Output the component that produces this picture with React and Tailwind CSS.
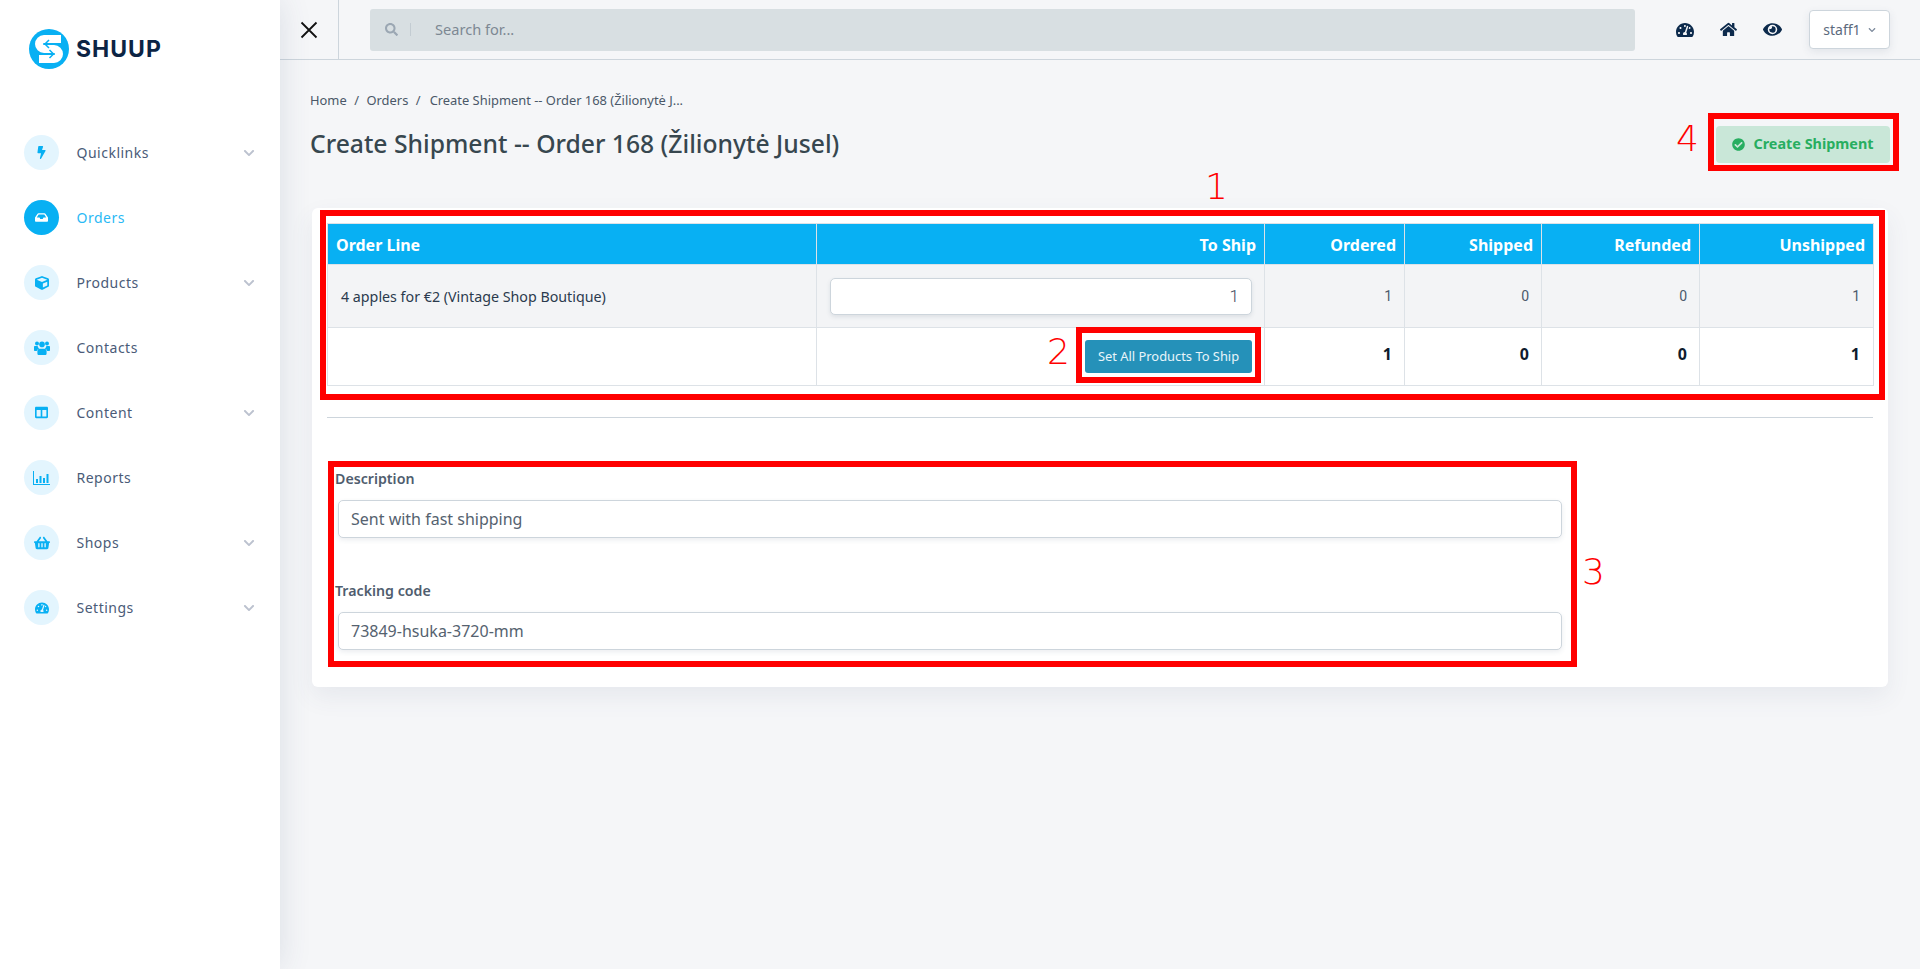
import React from 'react'
import {
  FaBolt, FaInbox, FaCube, FaColumns, FaShoppingBasket,
  FaTachometerAlt, FaHome, FaEye, FaCheckCircle, FaSearch, FaChevronDown,
} from 'react-icons/fa'

const UsersIcon = ({ className }) => (
  <svg className={className} width="16" height="14" viewBox="0 0 16 14" fill="currentColor">
    <circle cx="3" cy="2.600" r="2" />
    <circle cx="13" cy="2.600" r="2" />
    <circle cx="8" cy="3.400" r="2.800" />
    <path d="M0 5.800c0-.5.500-.8 1-.8h2.600c.2 1.100.8 2 1.600 2.600C3.800 8 3 9 2.800 10H1c-.6 0-1-.4-1-1zM16 5.800c0-.5-.5-.8-1-.8h-2.600c-.2 1.100-.8 2-1.600 2.600 1.400.4 2.200 1.400 2.400 2.400H15c.6 0 1-.4 1-1zM5.500 7.800h5c1.300 0 2.100 1 2.100 2.200v2.400c0 .9-.7 1.600-1.600 1.600H5c-.9 0-1.600-.7-1.600-1.600V10c0-1.200.8-2.200 2.100-2.200z" />
  </svg>
)

const BarsIcon = ({ className }) => (
  <svg className={className} width="17" height="14" viewBox="0 0 17 14" fill="currentColor">
    <path d="M0 0h1v13h16v1H0z" />
    <path d="M3 8h2v4H3zM6.500 5h2v7h-2zM10 7h2v5h-2zM13.500 3h2v9h-2z" />
  </svg>
)

const menu = [
  { label: 'Quicklinks', icon: FaBolt, size: 'text-[13px]', sub: true },
  { label: 'Orders', icon: FaInbox, size: 'text-[13px]', active: true },
  { label: 'Products', icon: FaCube, size: 'text-[14px]', sub: true },
  { label: 'Contacts', icon: UsersIcon },
  { label: 'Content', icon: FaColumns, size: 'text-[13px]', sub: true },
  { label: 'Reports', icon: BarsIcon },
  { label: 'Shops', icon: FaShoppingBasket, size: 'text-[16px]', sub: true },
  { label: 'Settings', icon: FaTachometerAlt, size: 'text-[14px]', sub: true },
]

const Logo = () => (
  <div className="flex items-center gap-[7px]">
    <svg width="40" height="40" viewBox="0 0 40 40">
      <circle cx="20" cy="20" r="20" fill="#08b0f3" />
      <path d="M32 10H15a5 5 0 0 0 0 10h10a5 5 0 0 1 0 10H10" fill="none" stroke="#fff" strokeWidth="8" />
      <path d="M20 11l-4 4 4 4M20.500 21l4 4 -4 4" fill="none" stroke="#08b0f3" strokeWidth="1.500" />
    </svg>
    <span className="font-['Inter',sans-serif] text-[23px] font-bold leading-none tracking-[1px] text-[#0c2444]">SHUUP</span>
  </div>
)

const SideItem = ({ item }) => {
  const Icon = item.icon
  return (
    <a className="flex h-[65px] items-center pl-6 pr-[25px]">
      <span className={`flex h-[35px] w-[35px] items-center justify-center rounded-full ${item.active ? 'bg-[#08b0f3] text-white' : 'bg-[#e3f5fe] text-[#08b0f3]'}`}>
        <Icon className={item.size} />
      </span>
      <span className={`ml-[17.500px] flex-1 text-[14px] tracking-[0.5px] ${item.active ? 'text-[#2ab9f5]' : 'text-[#4a5b78]'}`}>{item.label}</span>
      {item.sub && <FaChevronDown className="text-[12px] text-[#bcc2cf]" />}
    </a>
  )
}

const Sidebar = () => (
  <aside className="relative z-10 flex w-[280px] shrink-0 flex-col bg-white shadow-[0_0_30px_rgba(60,80,110,0.14)]">
    <div className="flex h-[120px] items-start pl-[29px] pt-[29px]">
      <Logo />
    </div>
    <nav className="flex flex-col">
      {menu.map((item) => <SideItem key={item.label} item={item} />)}
    </nav>
  </aside>
)

const Topbar = () => (
  <header className="flex h-[60px] shrink-0 items-center border-b border-[#cdd5dc]">
    <button className="flex h-[59px] w-[59px] items-center justify-center border-r border-[#cdd5dc]">
      <svg width="18" height="18" viewBox="0 0 18 18"><path d="M1.500 1.500l15 15M16.500 1.500l-15 15" stroke="#111" strokeWidth="1.800" fill="none" /></svg>
    </button>
    <div className="ml-[31px] flex h-[42px] w-[1265px] items-center rounded-[3px] bg-[#d8dfe2]">
      <FaSearch className="ml-[15px] text-[13px] text-[#9ba7b3]" />
      <span className="ml-[12px] h-[13px] w-px bg-[#c3ccd2]" />
      <input readOnly placeholder="Search for..." className="ml-6 flex-1 bg-transparent text-[14.600px] outline-none placeholder:text-[#7d8893]" />
    </div>
    <div className="ml-[41px] flex items-center text-[#0c2a4c]">
      <FaTachometerAlt className="text-[18px]" />
      <FaHome className="ml-[26px] text-[17px]" />
      <FaEye className="ml-[26px] text-[19px]" />
    </div>
    <button className="ml-[27px] flex h-[39px] w-[81px] items-center justify-center gap-[7px] rounded-[4px] border border-[#cdd5dc] bg-white text-[14px] text-[#5c6a7c] shadow-[0_3px_8px_rgba(60,80,110,0.1)]">
      staff1 <FaChevronDown className="text-[8px] text-[#7d8a9c]" />
    </button>
  </header>
)

const OrderTable = () => {
  const th = 'border border-[#dde2e7] pt-px text-[16px] font-bold text-white px-2 text-right'
  const td = 'border border-[#dde2e7] px-2'
  return (
    <table className="w-[1546px] table-fixed border-collapse">
      <colgroup>
        <col className="w-[489px]" />
        <col className="w-[448px]" />
        <col className="w-[140px]" />
        <col className="w-[137px]" />
        <col className="w-[158px]" />
        <col className="w-[174px]" />
      </colgroup>
      <thead>
        <tr className="h-[41px] bg-[#08b0f3]">
          <th className={`${th} !text-left`}>Order Line</th>
          <th className={th}>To Ship</th>
          <th className={th}>Ordered</th>
          <th className={th}>Shipped</th>
          <th className={th}>Refunded</th>
          <th className={th}>Unshipped</th>
        </tr>
      </thead>
      <tbody>
        <tr className="h-[63px] bg-[#f3f4f6] text-[#2b3a4d]">
          <td className={`${td} !pl-[13px] pt-px text-[14.250px]`}>4 apples for €2 (Vintage Shop Boutique)</td>
          <td className={`${td} !pl-[13px] !pr-3`}>
            <input readOnly value="1" className="h-[37px] w-full rounded-[5px] border border-[#cdd5dc] bg-white pl-3 pr-3 text-right font-['Roboto',sans-serif] text-[17px] font-light text-[#3f4e62] shadow-[0_2px_4px_rgba(60,80,110,0.12)] outline-none" />
          </td>
          {[1, 0, 0, 1].map((n, i) => (
            <td key={i} className={`${td} !pr-3 text-right font-['Roboto',sans-serif] text-[14px] text-[#4c5a6c] last:!pr-[13px]`}>{n}</td>
          ))}
        </tr>
        <tr className="h-[58px] bg-white">
          <td className={td}></td>
          <td className={`${td} !pr-3`}>
            <button className="ml-auto block h-[33px] w-[167px] rounded-[3px] bg-[#2591b9] text-[12.900px] text-[#e8f5fa]">Set All Products To Ship</button>
          </td>
          {[1, 0, 0, 1].map((n, i) => (
            <td key={i} className={`${td} pb-1.5 !pr-3 text-right text-[16px] font-bold text-[#0f1b2d] last:!pr-[13px]`}>{n}</td>
          ))}
        </tr>
      </tbody>
    </table>
  )
}

const Field = ({ label, value, className }) => (
  <div className={className}>
    <label className="block pl-[8px] text-[14.200px] font-semibold leading-[20px] text-[#4f5d6e]">{label}</label>
    <input readOnly value={value} className="ml-[11px] mt-[11px] block h-[38px] w-[1224px] rounded-[5px] border border-[#cdd5dc] bg-white px-3 text-[16px] text-[#55626f] shadow-[0_2px_5px_rgba(60,80,110,0.1)] outline-none" />
  </div>
)

const Annotation = ({ className }) => (
  <div className={`pointer-events-none absolute border-[6px] border-[#ff0000] ${className}`} />
)

const Digit = ({ className, children }) => (
  <span className={`absolute font-['DejaVu_Sans',sans-serif] text-[36px] font-extralight leading-none text-[#ff0000] ${className}`}>{children}</span>
)

export default function App() {
  return (
    <div className="relative flex h-screen overflow-hidden bg-[#f5f6f8] font-['Noto_Sans',sans-serif]">
      <Sidebar />
      <main className="flex min-w-0 flex-1 flex-col">
        <Topbar />
        <div className="pl-[32px] pr-[32px]">
          <div className="-ml-[2px] mt-[30px] text-[12.900px] leading-[20px] text-[#4a5868]">
            <span>Home</span><span className="mx-[7.500px]">/</span>
            <span>Orders</span><span className="ml-[7.500px] mr-[9px]">/</span>
            <span>Create Shipment -- Order 168 (Žilionytė J...</span>
          </div>
          <div className="mt-[10px] flex h-[48px] items-center justify-between">
            <h1 className="-ml-[2px] text-[24.700px] font-medium text-[#37474f]">Create Shipment -- Order 168 (Žilionytė Jusel)</h1>
            <button className="-mr-[2px] flex h-[37px] w-[174px] items-center justify-center gap-2 rounded-[4px] bg-[#c9e7d8] text-[14.400px] font-bold text-[#27ae60]">
              <FaCheckCircle className="text-[13px]" /> Create Shipment
            </button>
          </div>
          <section className="mt-[40px] rounded-[6px] bg-white p-[15px] shadow-[0_10px_25px_rgba(60,80,110,0.08)]">
            <OrderTable />
            <hr className="mt-[31px] border-[#cdd5dc]" />
            <Field label="Description" value="Sent with fast shipping" className="mt-[51px]" />
            <Field label="Tracking code" value="73849-hsuka-3720-mm" className="mt-[43px]" />
            <div className="h-[22px]" />
          </section>
        </div>
      </main>

      <Annotation className="left-[320px] top-[210px] h-[190px] w-[1565px]" />
      <Annotation className="left-[1076px] top-[327px] h-[56px] w-[185px]" />
      <Annotation className="left-[328px] top-[461px] h-[206px] w-[1249px]" />
      <Annotation className="left-[1708px] top-[113px] h-[58px] w-[191px]" />
      <Digit className="left-[1205px] top-[169px]">1</Digit>
      <Digit className="left-[1047px] top-[334px]">2</Digit>
      <Digit className="left-[1582px] top-[554px]">3</Digit>
      <Digit className="left-[1676px] top-[121px]">4</Digit>
    </div>
  )
}
